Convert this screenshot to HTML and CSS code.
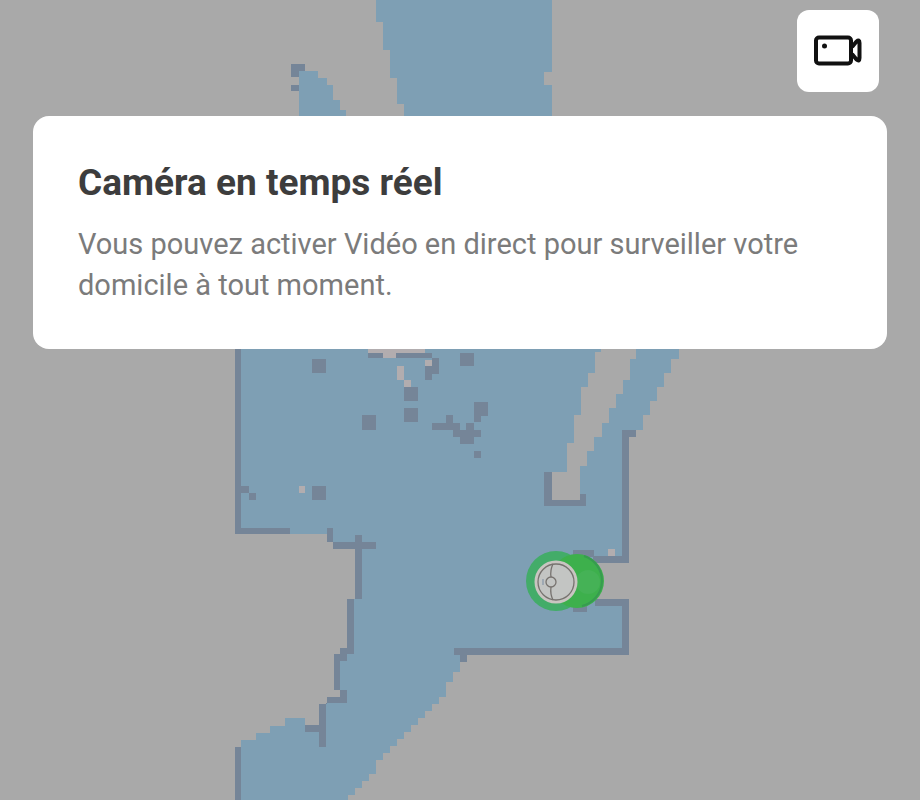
FILE: index.html
```html
<!DOCTYPE html>
<html lang="fr">
<head>
<meta charset="utf-8">
<meta name="viewport" content="width=device-width, initial-scale=1">
<title>Caméra en temps réel</title>
<link rel="stylesheet" href="styles.css">
</head>
<body>
<main class="screen">
  <svg class="map" viewBox="0 0 920 800" preserveAspectRatio="xMidYMin slice" aria-hidden="true">
    <g class="floor">
      <path d="M376 0V22H383V50H390V78H397V104H404V118H552V85H544V72H552V0Z"/>
      <path d="M299 71H318V78H327V85H333V100H340V110H346V118H299Z"/>
      <path d="M241 340H601V352H595V373H588V387H581V415H574V443H567V472H552V500H580V466H587V451H594V437H602V423H609V408H616V394H623V380H630V359H636V340H679V359H671V373H664V387H657V401H650V415H643V430H629V563H580V599H629V655H460V672H453V682H446V697H439V704H432V711H425V718H418V725H411V732H404V739H397V746H390V753H383V760H376V774H369V781H362V788H355V795H348V800H241V740H256V733H270V726H285V718H305V725H319V704H327V697H340V654H347V599H355V542H327V534H241Z"/>
    </g>
    <g class="wall">
      <path d="M291 64H305V71H299V77H291ZM291 85H299V91H291Z"/>
      <path d="M235 340H241V528H290V534H235ZM327 528H333V542H355V535H362V542H376V549H362V599H355V542H333V549H355V542H327Z"/>
      <path d="M333 542H376V549H362V598H355V549H333ZM347 599H354V654H347V661H340V690H347V703H326V747H319V732H305V725H319V704H327V697H340V690H334V654H340V648H347Z"/>
      <path d="M235 747H241V800H235ZM454 648H622V606H595V599H629V655H467V662H460V655H454Z"/>
      <path d="M622 430H636V437H629V563H593V556H622ZM544 472H552V500H580V494H586V506H544Z"/>
      <path d="M573 550H594V557H573ZM573 605H587V612H573Z"/>
      <path d="M368 353H383V358H368ZM396 353H432V358H439V374H432V380H425V366H432V358H396ZM460 353H474V366H460Z"/>
      <path d="M312 359H326V373H312ZM404 387H418V401H404ZM404 408H418V422H404ZM362 415H376V430H362ZM312 486H326V500H312ZM241 486H249V493H256V500H249V493H241Z"/>
      <path d="M474 402H488V416H481V422H474ZM432 423H446V415H453V423H460V430H466V423H474V430H481V437H474V444H460V437H453V430H432ZM474 451H481V458H474Z"/>
    </g>
    <g class="gap">
      <path d="M368 349H425V353H396V358H383V353H368ZM397 366H404V380H411V387H404V380H397ZM425 360H432V366H425ZM299 486H305V493H299ZM608 549H615V556H608Z"/>
    </g>
    <circle class="halo" cx="556" cy="581" r="30"/>
    <circle class="dock" cx="577" cy="581" r="27"/>
    <circle class="dock-light" cx="588" cy="582" r="12"/>
    <path class="dock-edge" d="M584 556A26 26 0 0 1 582 606"/>
    <g class="robot">
      <circle class="robot-shell" cx="556" cy="582" r="20"/>
      <circle cx="556" cy="582" r="18"/>
      <path d="M553 564Q550 570 551 577M551 587Q550 594 553 600"/>
      <circle cx="551" cy="582" r="5"/>
      <path class="robot-mark" d="M543 579V585"/>
    </g>
  </svg>

  <header class="toolbar">
    <button class="camera" type="button" aria-label="Vidéo en direct">
      <svg viewBox="0 0 50 34" aria-hidden="true">
        <rect x="3" y="3.500" width="35" height="26" rx="3"/>
        <path d="M39 13L43.500 7.500Q46.500 5 46.500 9V24Q46.500 28 43.500 25.500L39 20"/>
        <circle cx="11.500" cy="12" r="2.500"/>
      </svg>
    </button>
  </header>

  <section class="card" aria-labelledby="card-title">
    <h1 id="card-title">Caméra en temps réel</h1>
    <p>Vous pouvez activer Vidéo en direct pour surveiller votre domicile à tout moment.</p>
  </section>
</main>
</body>
</html>
```
FILE: styles.css
```css
* {
  box-sizing: border-box;
}

body {
  margin: 0;
  background: #a9a9a9;
  font-family: Roboto, "Liberation Sans", sans-serif;
}

.screen {
  position: relative;
  min-height: 100vh;
  padding: 10px 33px;
  overflow: hidden;
}

/* The map lies under the controls and fills the window. */
.map {
  position: absolute;
  inset: 0;
  width: 100%;
  height: 100%;
}

.floor {
  fill: #7e9fb4;
}

.wall {
  fill: #758598;
}

.gap {
  fill: #b2adaf;
}

.halo {
  fill: #43ac69;
}

.dock {
  fill: #3db04c;
}

.dock-light {
  fill: #45b256;
}

.dock-edge {
  fill: none;
  stroke: #379b50;
  stroke-width: 2;
}

.robot {
  fill: none;
  stroke: #77736f;
  stroke-width: 1.3;
}

.robot .robot-shell {
  fill: #c3c5c3;
  stroke: #c9c5c1;
  stroke-width: 3;
}

.robot .robot-mark {
  stroke: #8b9aab;
}

.toolbar {
  position: relative;
  display: flex;
  justify-content: flex-end;
  padding-right: 8px;
}

.camera {
  display: grid;
  place-items: center;
  width: 82px;
  height: 82px;
  padding: 0;
  border: 0;
  border-radius: 12px;
  background: #fff;
}

.camera svg {
  width: 50px;
  height: 34px;
  fill: none;
  stroke: #111;
  stroke-width: 4;
  stroke-linejoin: round;
}

.camera circle {
  fill: #111;
  stroke: none;
}

.card {
  position: relative;
  margin-top: 24px;
  padding: 45px 45px 43px;
  border-radius: 16px;
  background: #fff;
}

h1 {
  margin: 0 0 19px;
  color: #3d3d3d;
  font-size: 37px;
  font-weight: 700;
  line-height: 44px;
}

p {
  margin: 0;
  color: #7b7b7b;
  font-size: 29px;
  font-weight: 400;
  line-height: 41px;
}
```
